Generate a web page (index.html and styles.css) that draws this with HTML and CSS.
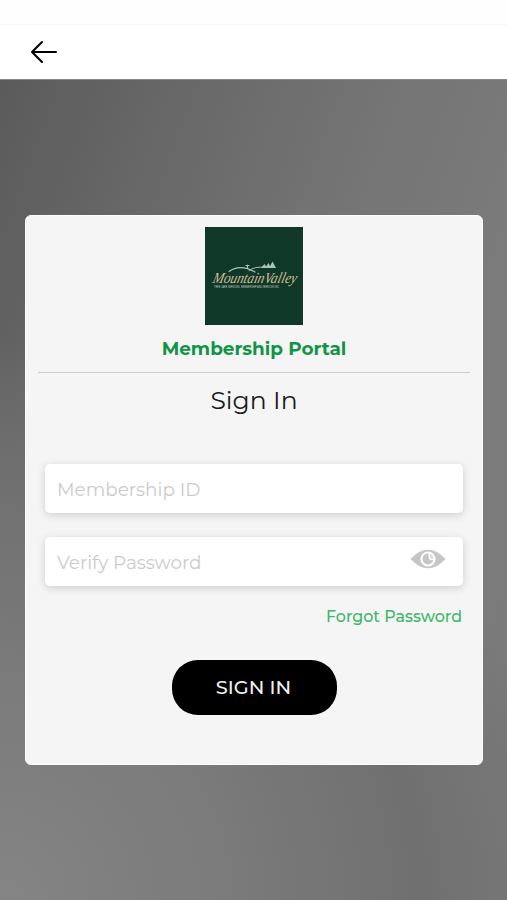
FILE: index.html
```html
<!DOCTYPE html>
<html lang="en">
<head>
    <meta charset="UTF-8">
    <meta name="viewport" content="width=device-width, initial-scale=1.0">
    <link rel="stylesheet" href="styles.css">
    <title>Membership Portal</title>
</head>
<body>
    <div class="status-bar"></div>
    <header class="top-bar">
        <a href="#" class="back" aria-label="Back">
            <svg width="28" height="24" viewBox="0 0 28 24" fill="none" stroke="#000" stroke-width="2" stroke-linecap="round" stroke-linejoin="round">
                <path d="M26 12H2M12 2L2 12L12 22"/>
            </svg>
        </a>
    </header>

    <main class="page">
        <form class="card">
            <svg class="logo" width="98" height="98" viewBox="0 0 98 98">
                <rect width="98" height="98" fill="#0f3828"/>
                <g fill="none" stroke="#a9c5b8" stroke-linecap="round">
                    <path d="M24 44.5Q35 36.5 50 45" stroke-width="1.2"/>
                    <path d="M44 43.5Q50 39 60 40.5H70" stroke-width="1"/>
                    <path d="M42.5 38V41.5M41 38.5H44" stroke-width="1.2"/>
                </g>
                <path d="M56 41L59.5 37L62 41ZM60 41L63.5 36L66 41ZM64 41L67.5 34.5L71 41Z" fill="#a9c5b8"/>
                <text class="logo-name" x="6" y="56.5" textLength="84" lengthAdjust="spacingAndGlyphs" transform="translate(15 0) skewX(-14)">MountainValley</text>
                <text class="logo-tag" x="9" y="61" textLength="65" lengthAdjust="spacingAndGlyphs">TREE CARE SERVICES, MEMBERSHIP AND SERVICES INC</text>
            </svg>
            <h1 class="portal">Membership Portal</h1>
            <h2 class="title">Sign In</h2>

            <div class="field">
                <input type="text" class="input" placeholder="Membership ID">
            </div>
            <div class="field">
                <input type="password" class="input" placeholder="Verify Password">
                <svg class="eye" width="36" height="20" viewBox="0 0 36 20">
                    <path d="M0.5 10Q9 0.7 18 0.7T35.5 10Q27 19.3 18 19.3T0.5 10Z" fill="#c6c6c6"/>
                    <circle cx="18" cy="10" r="7.6" fill="#fff"/>
                    <path d="M18.8 4.7A5.4 5.4 0 1 0 23.2 11.2Q19.8 11.6 18.8 9.4Q18 7 18.8 4.7Z" fill="#c6c6c6"/>
                    <path d="M20 5A5.4 5.4 0 0 1 23.4 10.2Q20.6 10.4 20 8.6Z" fill="#dcdcdc"/>
                </svg>
            </div>
            <a href="#" class="forgot">Forgot Password</a>
            <button type="button" class="btn">SIGN IN</button>
        </form>
    </main>
</body>
</html>
```
FILE: styles.css
```css
* {
    box-sizing: border-box;
}
body {
    margin: 0;
    height: 900px;
    display: flex;
    flex-direction: column;
    overflow: hidden;
    background-color: #fff;
    font-family: Montserrat, Inter, sans-serif;
}
.status-bar {
    height: 26px;
    background-color: #fefefe;
    border-bottom: 2px solid #fafafa;
}
.top-bar {
    height: 53px;
    padding: 0 0 1px 30px;
    display: flex;
    align-items: center;
}
.back {
    display: flex;
}
.page {
    flex: 1;
    padding: 135px 25px 0;
    border-top: 1px solid #888;
    background:
        radial-gradient(circle 560px at 0 100%, #848484 0, #7c7c7c 36%, #707070 75%, rgba(112, 112, 112, 0) 100%),
        linear-gradient(110deg, #5b5b5b 0%, #696969 25%, #757575 50%, #7c7c7c 75%, #787878 100%);
}
.card {
    width: 458px;
    height: 550px;
    padding: 11px 19px 0 19px;
    display: flex;
    flex-direction: column;
    align-items: center;
    background-color: #f5f5f5;
    border: 1px solid #fdfdfd;
    border-radius: 6px;
}
.logo {
    flex: none;
    overflow: visible;
}
.logo-name {
    font-family: "Liberation Serif", serif;
    font-size: 15.5px;
    font-style: italic;
    fill: #d0bf92;
}
.logo-tag {
    font-family: "Liberation Sans", sans-serif;
    font-size: 2.6px;
    fill: #c5d2c4;
}
.portal {
    width: 432px;
    height: 48px;
    margin: 0;
    border-bottom: 1px solid #ccc;
    text-align: center;
    font-size: 18.4px;
    font-weight: 700;
    line-height: 48px;
    color: #119447;
}
.title {
    height: 56px;
    margin: 0 0 35px;
    font-size: 25px;
    font-weight: 400;
    line-height: 55px;
    color: #1b1b1b;
}
.field {
    width: 418px;
    height: 49px;
    margin-bottom: 24px;
    padding: 0 17px 0 12px;
    display: flex;
    align-items: center;
    background-color: #fff;
    border-radius: 5px;
    box-shadow: 0 2px 9px rgba(0, 0, 0, .16);
}
.input {
    flex: 1;
    min-width: 0;
    padding: 2px 0 0;
    border: none;
    outline: none;
    background: none;
    font-family: inherit;
    font-size: 18.4px;
}
.input::placeholder {
    color: #cbcbcb;
}
.eye {
    margin-bottom: 5px;
}
.forgot {
    align-self: flex-end;
    height: 22px;
    margin: -4px 1px 0 0;
    font-size: 15.9px;
    font-weight: 500;
    line-height: 22px;
    color: #3fb868;
    text-decoration: none;
}
.btn {
    width: 165px;
    height: 55px;
    margin-top: 32px;
    padding: 0 7px 1px 6px;
    border: none;
    border-radius: 26px;
    background-color: #000;
    color: #f0f0f0;
    font-family: inherit;
    font-size: 19.3px;
    font-weight: 500;
}
```
